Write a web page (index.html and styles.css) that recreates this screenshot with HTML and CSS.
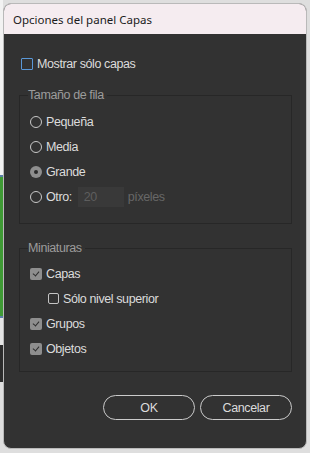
FILE: index.html
```html
<!DOCTYPE html>
<html lang="es">
<head>
    <meta charset="UTF-8">
    <meta name="viewport" content="width=device-width, initial-scale=1.0">
    <title>Opciones del panel Capas</title>
    <link rel="stylesheet" href="styles.css">
</head>
<body>
    <div class="dialog">
        <div class="titlebar">Opciones del panel Capas</div>

        <div class="content">
            <div class="option top-option">
                <span class="box focus"></span>
                <span>Mostrar sólo capas</span>
            </div>

            <fieldset class="group">
                <legend>Tamaño de fila</legend>
                <div class="option row">
                    <span class="radio"></span>
                    <span>Pequeña</span>
                </div>
                <div class="option row">
                    <span class="radio"></span>
                    <span>Media</span>
                </div>
                <div class="option row">
                    <span class="radio on"></span>
                    <span>Grande</span>
                </div>
                <div class="option row">
                    <span class="radio"></span>
                    <span>Otro:</span>
                    <span class="num-input">20</span>
                    <span class="disabled">píxeles</span>
                </div>
            </fieldset>

            <fieldset class="group group-thumbs">
                <legend>Miniaturas</legend>
                <div class="option row">
                    <span class="box on"></span>
                    <span>Capas</span>
                </div>
                <div class="option row sub">
                    <span class="box"></span>
                    <span>Sólo nivel superior</span>
                </div>
                <div class="option row">
                    <span class="box on"></span>
                    <span>Grupos</span>
                </div>
                <div class="option row">
                    <span class="box on"></span>
                    <span>Objetos</span>
                </div>
            </fieldset>

            <div class="buttons">
                <button class="btn">OK</button>
                <button class="btn">Cancelar</button>
            </div>
        </div>
    </div>
</body>
</html>
```

FILE: styles.css
```css
html, body {
    height: 100%;
}

body {
    margin: 0;
    padding: 3px;
    box-sizing: border-box;
    font-family: "Liberation Sans", Arial, sans-serif;
    /* franja de la ventana de atras, visible a la izquierda */
    background:
        linear-gradient(to bottom,
            #f2f2f2 0, #f2f2f2 175px,
            #5b7fa6 175px, #5b7fa6 177px,
            #3f9a35 177px, #3f9a35 316px,
            #5b7fa6 316px, #5b7fa6 318px,
            #e4e4e4 318px, #e4e4e4 345px,
            #2c2c2c 345px, #2c2c2c 382px,
            #dedede 382px) left top / 3px 100% no-repeat,
        #dedede;
}

.dialog {
    width: 304px;
    height: 446px;
    box-sizing: border-box;
    border: 1px solid #b9b9b9;
    border-radius: 8px;
    overflow: hidden;
    background-color: #323232;
    display: flex;
    flex-direction: column;
}

.titlebar {
    height: 30px;
    flex-shrink: 0;
    padding-left: 9px;
    display: flex;
    align-items: center;
    background-color: #f5ecf0;
    color: #1b1b1b;
    font-family: "Noto Sans", "Open Sans", sans-serif;
    font-size: 11.5px;
}

.content {
    padding: 23px 14px 0 15px;
    display: flex;
    flex-direction: column;
}

.option {
    display: flex;
    align-items: center;
    gap: 4px;
    color: #dcdcdc;
    font-size: 12.5px;
    letter-spacing: -0.4px;
}

.top-option {
    height: 14px;
    margin-left: 2px;
}

.row {
    height: 25px;
}

.sub {
    padding-left: 18px;
}

.box {
    width: 11px;
    height: 11px;
    box-sizing: border-box;
    border: 1px solid #c4c4c4;
    border-radius: 2px;
    position: relative;
    flex-shrink: 0;
}

.box.focus {
    width: 12px;
    height: 12px;
    border: 1.5px solid #5a98d8;
    border-radius: 1px;
}

.box.on {
    width: 12px;
    height: 12px;
    border: none;
    background-color: #8e8e8e;
}

.box.on::after {
    content: "";
    position: absolute;
    left: 4px;
    top: 2px;
    width: 3px;
    height: 5px;
    border-right: 1.6px solid #2e2e2e;
    border-bottom: 1.6px solid #2e2e2e;
    transform: rotate(40deg);
}

.radio {
    width: 12px;
    height: 12px;
    box-sizing: border-box;
    border: 1.3px solid #c8c8c8;
    border-radius: 50%;
    position: relative;
    flex-shrink: 0;
}

.radio.on {
    border: none;
    background-color: #8e8e8e;
}

.radio.on::after {
    content: "";
    position: absolute;
    left: 4px;
    top: 4px;
    width: 4px;
    height: 4px;
    border-radius: 50%;
    background-color: #2a2a2a;
}

.group {
    margin: 17px 0 0 0;
    padding: 7px 10px 14px 10px;
    border: 1px solid #272727;
    min-width: 0;
}

.group legend {
    padding: 0 3px 0 0;
    margin-left: -2px;
    line-height: 14px;
    font-size: 12.5px;
    letter-spacing: -0.4px;
    color: #9c9c9c;
}

.group-thumbs {
    padding-top: 6px;
    padding-bottom: 10px;
}

.num-input {
    width: 46px;
    height: 20px;
    margin-left: 2px;
    padding-left: 6px;
    box-sizing: border-box;
    background-color: #393939;
    color: #5e5e5e;
    display: flex;
    align-items: center;
}

.disabled {
    color: #676767;
}

.buttons {
    margin-top: 23px;
    display: flex;
    justify-content: flex-end;
    gap: 5px;
}

.btn {
    width: 92px;
    height: 25px;
    padding: 0;
    background-color: transparent;
    border: 1.5px solid #cbcbcb;
    border-radius: 13px;
    color: #dcdcdc;
    font-family: "Liberation Sans", Arial, sans-serif;
    font-size: 12.5px;
    letter-spacing: -0.4px;
}
```
